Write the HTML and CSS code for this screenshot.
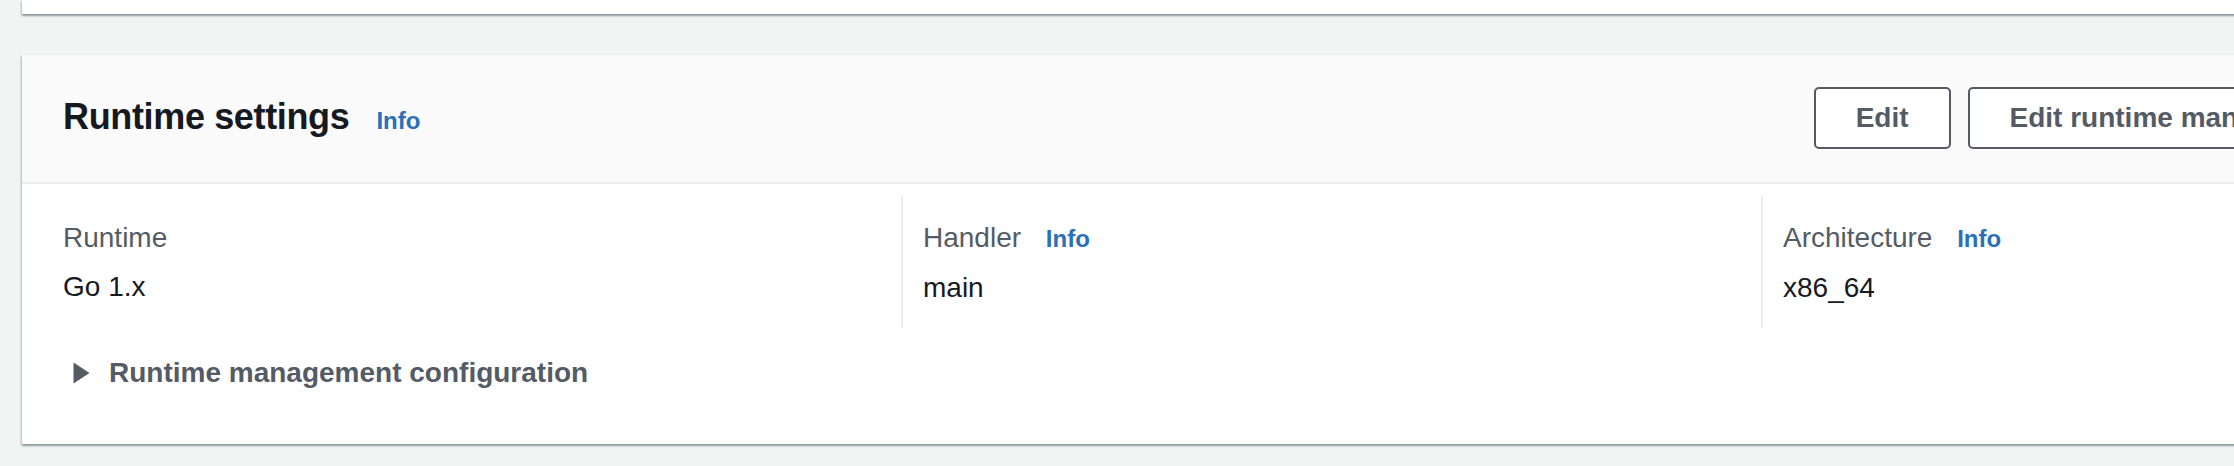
FILE: index.html
```html
<!DOCTYPE html>
<html lang="en">
<head>
<meta charset="utf-8">
<title>Runtime settings</title>
<link rel="stylesheet" href="styles.css">
</head>
<body>
<div class="page">
  <div class="card card-top"></div>

  <section class="card">
    <header class="card-header">
      <div class="title-group">
        <h2 class="title">Runtime settings</h2>
        <a class="info-link info-lg" href="#">Info</a>
      </div>
      <div class="actions">
        <button class="btn" type="button">Edit</button>
        <button class="btn" type="button">Edit runtime management configuration</button>
      </div>
    </header>

    <div class="card-body">
      <div class="columns">
        <div class="col">
          <div class="label">Runtime</div>
          <div class="value">Go 1.x</div>
        </div>
        <div class="col">
          <div class="label">Handler <a class="info-link" href="#">Info</a></div>
          <div class="value">main</div>
        </div>
        <div class="col">
          <div class="label">Architecture <a class="info-link" href="#">Info</a></div>
          <div class="value">x86_64</div>
        </div>
      </div>

      <div class="expander">
        <svg class="caret" width="17" height="22" viewBox="0 0 17 22" aria-hidden="true">
          <polygon points="0.5,0.5 16.5,11 0.5,21.5" fill="#545b64"/>
        </svg>
        <span class="expander-text">Runtime management configuration</span>
      </div>
    </div>
  </section>
</div>
</body>
</html>
```

FILE: styles.css
```css
html, body {
  margin: 0;
  padding: 0;
  overflow: hidden;
  background: #f2f3f3;
}

body {
  font-family: "Liberation Sans", Arial, sans-serif;
  color: #16191f;
  width: 2234px;
  height: 466px;
}

.page {
  padding-left: 22px;
}

.card {
  width: 2600px;
  background: #ffffff;
  box-shadow: 0 2px 2px 0 rgba(0, 28, 36, 0.3),
              1px 1px 2px 0 rgba(0, 28, 36, 0.15),
              -1px 1px 2px 0 rgba(0, 28, 36, 0.15);
}

.card-top {
  height: 14px;
  margin-bottom: 41px;
}

.card-header {
  display: flex;
  align-items: center;
  background: #fafafa;
  padding: 32px 40px 33px 41px;
  border-bottom: 2px solid #eaeded;
}

.title-group {
  display: flex;
  align-items: baseline;
  gap: 27px;
  margin-top: -2px;
}

.title {
  margin: 0;
  font-size: 36px;
  line-height: 44px;
  font-weight: 700;
  letter-spacing: -0.35px;
  color: #16191f;
}

.info-link {
  font-size: 24px;
  font-weight: 700;
  color: #2a6fb7;
  text-decoration: none;
  margin-left: 17px;
}

.info-lg {
  margin-left: 0;
}

.actions {
  margin-left: auto;
  display: flex;
  gap: 17px;
}

.btn {
  height: 62px;
  padding: 0 40px;
  border: 2px solid #545b64;
  border-radius: 5px;
  background: #ffffff;
  color: #545b64;
  font-family: "Liberation Sans", Arial, sans-serif;
  font-size: 28px;
  font-weight: 700;
  white-space: nowrap;
}

.card-body {
  padding: 12px 0 51px 19px;
}

.columns {
  display: grid;
  grid-template-columns: repeat(3, 860px);
}

.col {
  border-left: 2px solid #eaeded;
  padding: 22px 0 20px 20px;
}

.col:first-child {
  border-left-color: transparent;
}

.label {
  font-size: 28px;
  line-height: 40px;
  color: #545b64;
  margin-bottom: 9px;
}

.value {
  font-size: 28px;
  line-height: 40px;
  color: #16191f;
}

.expander {
  display: flex;
  align-items: center;
  margin-top: 25px;
  padding-left: 32px;
  height: 40px;
}

.caret {
  display: block;
  margin-right: 19px;
}

.expander-text {
  font-size: 28px;
  line-height: 40px;
  font-weight: 700;
  color: #545b64;
}
```
